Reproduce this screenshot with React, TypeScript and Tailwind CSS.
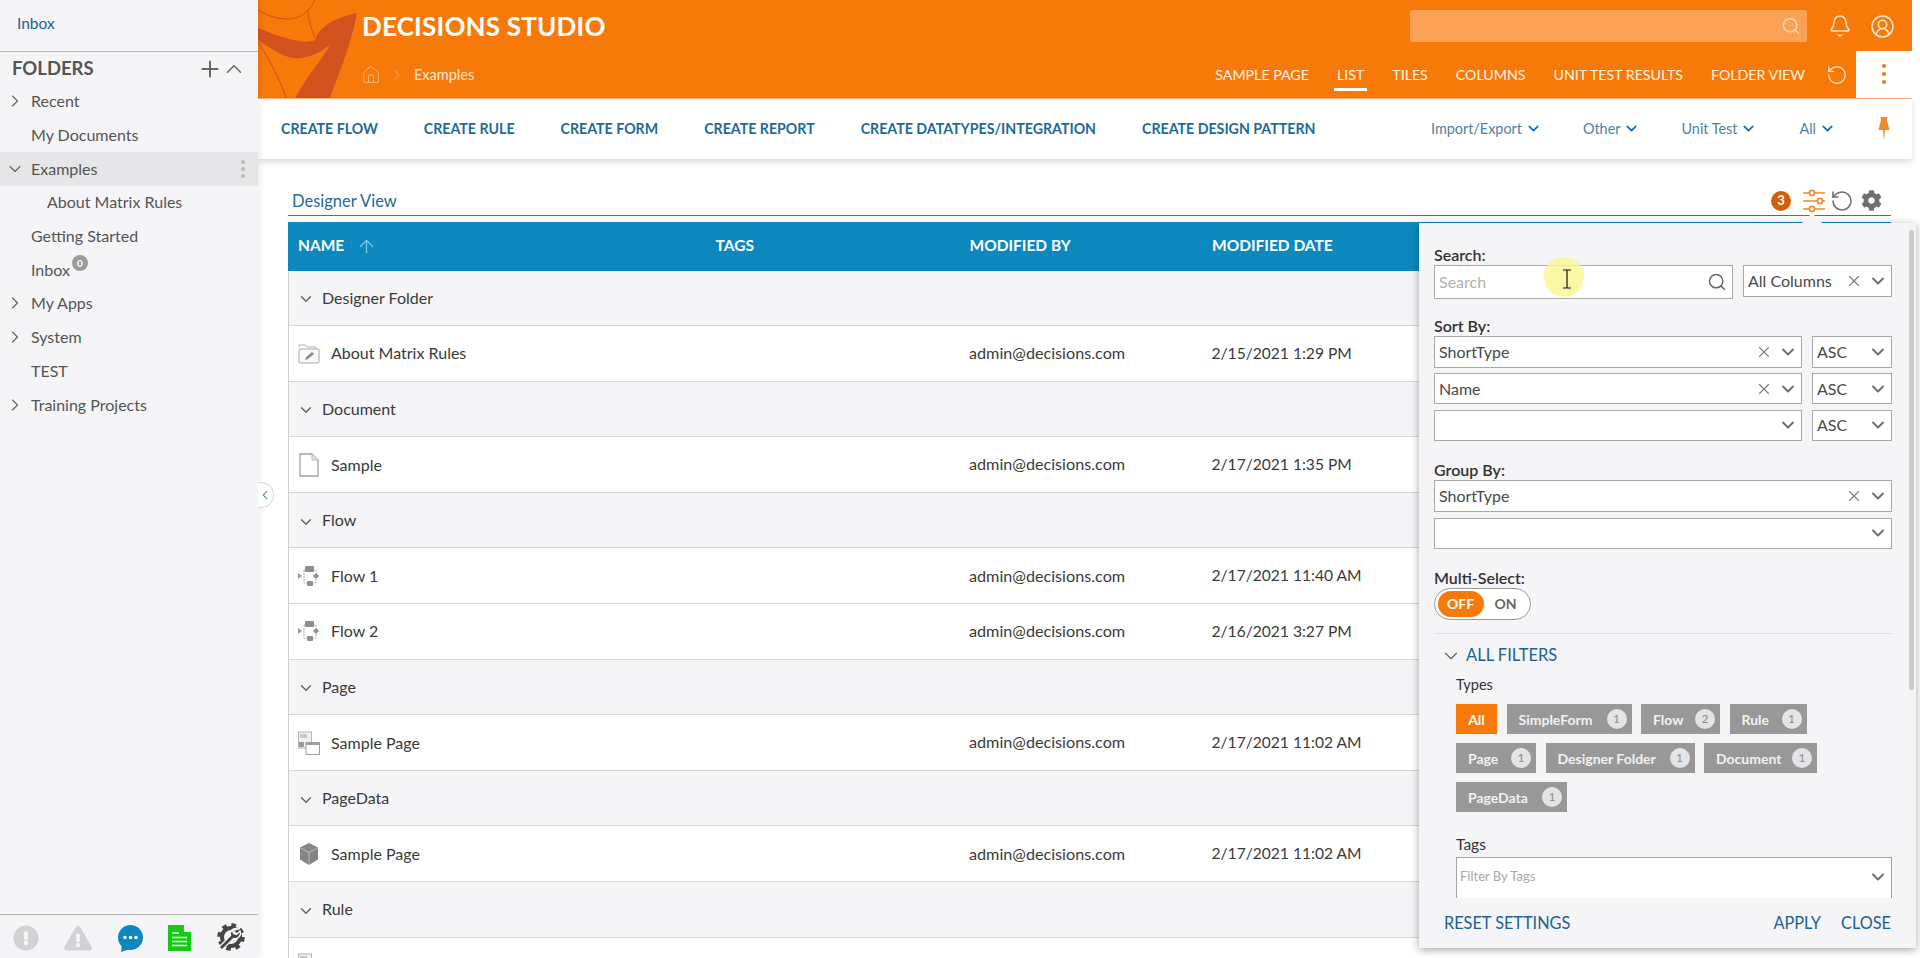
import React from "react";
import {
  ChevronRight, ChevronDown, ChevronUp, ChevronLeft, Plus, House, Bell, CircleUserRound,
  RotateCcw, Search, X, ArrowUp,
} from "lucide-react";
import { FaCog, FaExclamationCircle, FaExclamationTriangle } from "react-icons/fa";

const tree = [
  { t: "Recent", c: "r" },
  { t: "My Documents" },
  { t: "Examples", c: "d", active: true },
  { t: "About Matrix Rules", sub: true },
  { t: "Getting Started" },
  { t: "Inbox", badge: true },
  { t: "My Apps", c: "r" },
  { t: "System", c: "r" },
  { t: "TEST" },
  { t: "Training Projects", c: "r" },
];

function FolderIcon() {
  return (
    <svg width="22" height="22" viewBox="0 0 22 22" fill="none">
      <path d="M1 5V3h6l2 2h9v2" stroke="#b5b5b5" strokeWidth="1" />
      <rect x="1" y="7" width="20" height="14" rx="1" fill="#fafafa" stroke="#a8a8a8" />
      <path d="M7 18l1-3 6-5 2 2-6 5z" fill="#8c8c8c" />
    </svg>
  );
}
function DocIcon() {
  return (
    <svg width="22" height="24" viewBox="0 0 22 24" fill="none">
      <path d="M2 1h12l6 6v16H2z" fill="#fff" stroke="#a3a3a3" strokeWidth="1.3" />
      <path d="M14 1v6h6" fill="#e4e4e4" stroke="#b8b8b8" />
    </svg>
  );
}
function FlowIcon() {
  return (
    <svg width="22" height="22" viewBox="0 0 22 22" fill="none">
      <path d="M0 8l4 3-4 3z" fill="#9b9b9b" />
      <rect x="6" y="5" width="12" height="13" fill="none" stroke="#b0b0b0" strokeDasharray="2 1" />
      <rect x="7" y="1" width="9" height="6" rx="1" fill="#8f8f8f" />
      <rect x="9" y="16" width="6" height="5" rx="1" fill="#8f8f8f" />
      <path d="M18 8l3 3-3 3-3-3z" fill="#8f8f8f" />
    </svg>
  );
}
function PageIcon() {
  return (
    <svg width="22" height="24" viewBox="0 0 22 24" fill="none">
      <rect x="0.5" y="1" width="13" height="16" fill="#f1f1f1" stroke="#b5b5b5" />
      <rect x="2" y="3" width="7" height="4" fill="#c9c9c9" />
      <rect x="1" y="11" width="5" height="5" fill="#9a9a9a" />
      <rect x="8" y="11.5" width="13.5" height="12" fill="#fff" stroke="#9f9f9f" />
      <rect x="8" y="11.5" width="13.5" height="2.5" fill="#9f9f9f" />
    </svg>
  );
}
function CubeIcon() {
  return (
    <svg width="20" height="22" viewBox="0 0 20 22">
      <path d="M10 0l9 4.5v12L10 22l-9-5.500v-12z" fill="#858585" />
      <path d="M1.500 5L10 9.500 18.500 5M10 9.500V22" stroke="#c4c4c4" strokeWidth="0.9" fill="none" />
    </svg>
  );
}

type Row = { g?: string; n?: string; ic?: React.ReactNode; by?: string; date?: string };
const rows: Row[] = [
  { g: "Designer Folder" },
  { n: "About Matrix Rules", ic: <FolderIcon />, by: "admin@decisions.com", date: "2/15/2021 1:29 PM" },
  { g: "Document" },
  { n: "Sample", ic: <DocIcon />, by: "admin@decisions.com", date: "2/17/2021 1:35 PM" },
  { g: "Flow" },
  { n: "Flow 1", ic: <FlowIcon />, by: "admin@decisions.com", date: "2/17/2021 11:40 AM" },
  { n: "Flow 2", ic: <FlowIcon />, by: "admin@decisions.com", date: "2/16/2021 3:27 PM" },
  { g: "Page" },
  { n: "Sample Page", ic: <PageIcon />, by: "admin@decisions.com", date: "2/17/2021 11:02 AM" },
  { g: "PageData" },
  { n: "Sample Page", ic: <CubeIcon />, by: "admin@decisions.com", date: "2/17/2021 11:02 AM" },
  { g: "Rule" },
  { n: "", ic: <PageIcon /> },
];

function Select({ value, h, clear = true, w }: { value?: string; h: string; clear?: boolean; w: string }) {
  return (
    <div className={`${h} ${w} shrink-0 bg-white border border-[#a9a9a9] flex items-center pl-[4px] pr-[3px] text-[16px] text-[#4a4a4a]`}>
      <span className="flex-1 truncate">{value}</span>
      {clear && <X className="size-[18px] text-[#7b7b7b] mr-[5px]" strokeWidth={1.5} />}
      <ChevronDown className="size-[20px] text-[#6b6b6b]" strokeWidth={2.2} />
    </div>
  );
}

function Label({ children }: { children: React.ReactNode }) {
  return <div className="h-[21px] leading-[21px] text-[16px] font-semibold text-[#333]">{children}</div>;
}

const chips = [
  { t: "SimpleForm", n: 1, w: "w-[125px]" },
  { t: "Flow", n: 2, w: "w-[79px]" },
  { t: "Rule", n: 1, w: "w-[77px]" },
  { t: "Page", n: 1, w: "w-[80px]" },
  { t: "Designer Folder", n: 1, w: "w-[149px]" },
  { t: "Document", n: 1, w: "w-[113px]" },
  { t: "PageData", n: 1, w: "w-[111px]" },
];

export default function App() {
  return (
    <div className="relative w-[1920px] h-[958px] overflow-hidden flex bg-white pr-[8px] font-['Lato',sans-serif] text-[15px]">
      {/* sidebar */}
      <aside className="w-[258px] shrink-0 h-full bg-[#f5f4f7] flex flex-col shadow-[2px_0_6px_rgba(0,0,0,0.08)] z-10">
        <div className="h-[52px] border-b-[1.5px] border-[#b5b5b5] pl-[17px] pt-[13px] text-[#20628f] text-[15.5px] leading-[20px]">Inbox</div>
        <div className="h-[30.5px] mt-[2px] flex items-center pl-[12px] pr-[11.5px] text-[#555]">
          <span className="text-[18.5px] font-bold flex-1">FOLDERS</span>
          <Plus className="size-[26px] text-[#666] -mr-[2.5px]" strokeWidth={1.8} />
          <ChevronUp className="size-[26px] text-[#666]" strokeWidth={1.4} />
        </div>
        <div className="flex-1">
          {tree.map((it) => (
            <div key={it.t} className={`h-[33.7px] flex items-center text-[16px] text-[#555] ${it.active ? "bg-[#e6e5e8]" : ""} ${it.sub ? "pl-[47px]" : "pl-[5px]"}`}>
              {!it.sub && (
                <span className="w-[26px] flex">
                  {it.c === "r" && <ChevronRight className="size-[20px] text-[#666]" strokeWidth={1.4} />}
                  {it.c === "d" && <ChevronDown className="size-[20px] text-[#666]" strokeWidth={1.4} />}
                </span>
              )}
              <span>{it.t}</span>
              {it.badge && (
                <span className="ml-[2px] -mt-[13px] size-[16px] rounded-full bg-[#9b9b9b] text-white text-[10px] font-bold flex items-center justify-center">0</span>
              )}
              {it.active && (
                <span className="ml-auto mr-[13px] flex flex-col gap-[3px]">
                  <i className="size-[4px] rounded-full bg-[#b9b9b9]" />
                  <i className="size-[4px] rounded-full bg-[#b9b9b9]" />
                  <i className="size-[4px] rounded-full bg-[#b9b9b9]" />
                </span>
              )}
            </div>
          ))}
        </div>
        <div className="h-[44px] border-t-[1.5px] border-[#b8b8b8] flex items-center justify-between pl-[13px] pr-[12px] pt-[3px]">
          <FaExclamationCircle className="text-[#d2d2d4] text-[26px]" />
          <FaExclamationTriangle className="text-[#d2d2d4] text-[28px]" />
          <svg width="27" height="27" viewBox="0 0 27 27">
            <circle cx="13.500" cy="12.500" r="12.500" fill="#0e87c0" />
            <path d="M5 20l-1 7 9-3z" fill="#0e87c0" />
            <circle cx="8" cy="12.500" r="1.800" fill="#fff" />
            <circle cx="13.500" cy="12.500" r="1.800" fill="#fff" />
            <circle cx="19" cy="12.500" r="1.800" fill="#fff" />
          </svg>
          <svg width="23" height="26" viewBox="0 0 23 26">
            <path d="M0 0h16l7 7v19H0z" fill="#16c916" />
            <path d="M16 0v7h7" fill="#e8fbe8" />
            <path d="M4 8h7M4 12.500h15M4 16.500h15M4 20.500h15" stroke="#fff" strokeWidth="1.600" />
          </svg>
          <svg width="30" height="30" viewBox="0 0 30 30" fill="none">
            <circle cx="15" cy="14" r="9" stroke="#454545" strokeWidth="4" />
            <circle cx="15" cy="14" r="12" stroke="#454545" strokeWidth="3.500" strokeDasharray="4.700 4.725" />
            <path d="M22 6a5.500 5.500 0 0 0-7.500 6.500L3 24l3 3 11.500-11.500A5.500 5.500 0 0 0 24 8l-3.500 3.500-3-1-1-3z" fill="#454545" stroke="#f5f4f7" strokeWidth="1.400" />
          </svg>
        </div>
      </aside>

      {/* main */}
      <main className="relative flex-1 min-w-0 h-full flex flex-col">
        <header className="relative h-[98.5px] shrink-0 bg-[#f7790a] overflow-hidden border-b border-[#f9b277]">
          <svg className="absolute left-0 top-0" width="110" height="98" viewBox="0 0 110 98" fill="none">
            <path d="M99 13C80 17 62 25 57 40C45 45 25 38 0 28L0 40C15 50 30 60 42 58C55 57 65 50 72 45C65 58 50 75 37 98L72 98C78 80 92 50 99 13Z" fill="#d1521f" />
            <path d="M0 10C20 22 40 22 50 10C54 6 56 3 56 0M50 10C50 20 54 30 57 38M0 42C12 60 22 80 28 98" stroke="#c9521a" strokeWidth="1" />
          </svg>
          <div className="relative h-[52px] flex items-center pl-[104px] pr-[17px]">
            <span className="text-[26px] font-bold text-white tracking-[0.2px]">DECISIONS STUDIO</span>
            <div className="ml-auto w-[397px] h-[32px] rounded-[2px] bg-[#fba254] flex items-center justify-end pr-[6px] mr-[21px]">
              <Search className="size-[20px] text-[#fde3c9]" strokeWidth={1.5} />
            </div>
            <Bell className="size-[24px] text-[#fde3c9] mr-[18px]" strokeWidth={1.5} />
            <CircleUserRound className="size-[25px] text-[#fde3c9]" strokeWidth={1.5} />
          </div>
          <div className="relative h-[45.5px] flex items-center pl-[103px]">
            <House className="size-[20px] text-[#fbb574]" strokeWidth={1.2} />
            <ChevronRight className="size-[16px] text-[#fbb574] ml-[8px]" strokeWidth={1.2} />
            <span className="ml-[9px] text-[14.5px] text-[#fde7d2]">Examples</span>
            <nav className="ml-auto flex items-center gap-[28px] text-[14.2px] text-[#fff3e8] mr-[21px]">
              <span>SAMPLE PAGE</span>
              <span className="relative">
                LIST
                <i className="absolute -left-[3px] -right-[3px] -bottom-[6px] h-[3px] bg-white" />
              </span>
              <span>TILES</span>
              <span>COLUMNS</span>
              <span>UNIT TEST RESULTS</span>
              <span>FOLDER VIEW</span>
            </nav>
            <RotateCcw className="size-[22px] text-[#fde3c9] mr-[8px]" strokeWidth={1.4} />
            <div className="w-[56px] h-[47px] -mt-[1px] bg-white flex flex-col items-center justify-center gap-[4px]">
              <i className="size-[4px] rounded-full bg-[#e8791f]" />
              <i className="size-[4px] rounded-full bg-[#e8791f]" />
              <i className="size-[4px] rounded-full bg-[#e8791f]" />
            </div>
          </div>
        </header>

        <div className="h-[60.5px] shrink-0 bg-white shadow-[0_3px_6px_rgba(0,0,0,0.14)] z-[1] flex items-center pl-[23px] pr-[22px] text-[#1c6a9c] text-[14.2px] font-bold">
          <div className="flex gap-[46px]">
            <span>CREATE FLOW</span>
            <span>CREATE RULE</span>
            <span>CREATE FORM</span>
            <span>CREATE REPORT</span>
            <span>CREATE DATATYPES/INTEGRATION</span>
            <span>CREATE DESIGN PATTERN</span>
          </div>
          <div className="ml-auto flex items-center font-normal text-[14.4px] text-[#4f7fa3]">
            <span>Import/Export</span>
            <ChevronDown className="size-[17px] ml-[3px] text-[#0e6fae] mr-[41px]" strokeWidth={2.4} />
            <span>Other</span>
            <ChevronDown className="size-[17px] ml-[3px] text-[#0e6fae] mr-[41px]" strokeWidth={2.4} />
            <span>Unit Test</span>
            <ChevronDown className="size-[17px] ml-[3px] text-[#0e6fae] mr-[42px]" strokeWidth={2.4} />
            <span>All</span>
            <ChevronDown className="size-[17px] ml-[3px] text-[#0e6fae] mr-[42px]" strokeWidth={2.4} />
            <svg width="12" height="24" viewBox="0 0 12 24">
              <path d="M2.500 0h7L9 3l2.500 10H.500L3 3z" fill="#ee8a2c" />
              <path d="M5 13h2l-1 11z" fill="#ee8a2c" />
            </svg>
          </div>
        </div>

        <div className="flex-1 min-h-0 pl-[30px] pr-[21px] overflow-hidden">
          <div className="h-[56.5px] border-b-[1.5px] border-[#2b7fa5] flex items-end pb-[1px] pl-[4px] pr-[9px]">
            <span className="text-[16.5px] text-[#25699a]">Designer View</span>
            <div className="ml-auto flex items-center h-[26px]">
              <span className="size-[20px] rounded-full bg-[#d2600a] text-white text-[13px] font-bold flex items-center justify-center">3</span>
              <svg className="ml-[11px]" width="24" height="24" viewBox="0 0 24 24" fill="none" stroke="#ee8a2c" strokeWidth="1.600">
                <path d="M1 4h6M13 4h10M1 12h14M21 12h2M1 20h6M13 20h10" />
                <circle cx="10" cy="4" r="2.600" />
                <circle cx="18" cy="12" r="2.600" />
                <circle cx="10" cy="20" r="2.600" />
              </svg>
              <RotateCcw className="size-[24px] text-[#707070] ml-[4px]" strokeWidth={1.6} />
              <FaCog className="text-[#6f6f6f] text-[21px] ml-[7px]" />
            </div>
          </div>
          <div className="h-[49px] mt-[6px] bg-[#0d88bf] flex items-center text-white font-bold text-[15.5px]">
            <div className="w-[427.5px] pl-[10px] flex items-center">
              NAME
              <ArrowUp className="size-[21px] ml-[12px] text-[#7cc8ea]" strokeWidth={1.5} />
            </div>
            <div className="w-[254px]">TAGS</div>
            <div className="w-[242.5px]">MODIFIED BY</div>
            <div>MODIFIED DATE</div>
          </div>
          <div className="border-l-[1.5px] border-[#cfcfcf] text-[16px] text-[#3a3a3a]">
            {rows.map((r, i) =>
              r.g ? (
                <div key={i} className="h-[55.6px] bg-[#f5f4f7] border-b-[1.5px] border-[#d8d8d8] flex items-center pl-[8px]">
                  <ChevronDown className="size-[18px] text-[#666] mr-[7px] mt-[3px]" strokeWidth={1.9} />
                  <span>{r.g}</span>
                </div>
              ) : (
                <div key={i} className="h-[55.6px] bg-white border-b-[1.5px] border-[#d8d8d8] flex items-center">
                  <div className="w-[426px] pl-[9px] flex items-center">
                    <span className="w-[22px] flex justify-center">{r.ic}</span>
                    <span className="ml-[11px]">{r.n}</span>
                  </div>
                  <div className="w-[254px]" />
                  <div className="w-[242.5px] text-[16.2px]">{r.by}</div>
                  <div className="text-[15.6px]">{r.date}</div>
                </div>
              )
            )}
          </div>
        </div>
      </main>

      {/* settings popover */}
      <div className="absolute left-[1419px] top-[223px] w-[497px] h-[725px] z-20 bg-[#f5f4f7] shadow-[0_2px_8px_rgba(0,0,0,0.35)]">
        <i className="absolute left-[383px] -top-[10px] border-x-[10px] border-x-transparent border-b-[10px] border-b-[#f5f4f7]" />
        <div className="h-[675px] overflow-hidden pl-[15px] pr-[24px] pt-[21px]">
          <Label>Search:</Label>
          <div className="flex gap-[10px]">
            <div className="w-[299px] h-[34px] bg-white border border-[#a9a9a9] flex items-center pl-[4px] pr-[5px] text-[16px] text-[#b0b0b0]">
              <span className="flex-1">Search</span>
              <Search className="size-[20px] text-[#666]" strokeWidth={1.8} />
            </div>
            <Select value="All Columns" h="h-[32px]" w="w-[149px]" />
          </div>

          <div className="mt-[16px]"><Label>Sort By:</Label></div>
          <div className="flex gap-[10px]">
            <Select value="ShortType" h="h-[32px]" w="w-[368px]" />
            <Select value="ASC" h="h-[32px]" w="w-[80px]" clear={false} />
          </div>
          <div className="flex gap-[10px] mt-[5px]">
            <Select value="Name" h="h-[31px]" w="w-[368px]" />
            <Select value="ASC" h="h-[31px]" w="w-[80px]" clear={false} />
          </div>
          <div className="flex gap-[10px] mt-[5.5px]">
            <Select h="h-[31px]" w="w-[368px]" clear={false} />
            <Select value="ASC" h="h-[31px]" w="w-[80px]" clear={false} />
          </div>

          <div className="mt-[18.5px]"><Label>Group By:</Label></div>
          <Select value="ShortType" h="h-[32px]" w="w-[458px]" />
          <div className="mt-[5.5px]"><Select h="h-[31.5px]" w="w-[458px]" clear={false} /></div>

          <div className="mt-[18px] h-[20.5px]"><Label>Multi-Select:</Label></div>
          <div className="w-[97px] h-[32px] rounded-full border border-[#9c9c9c] bg-white flex items-center pl-[2.5px] text-[14px] font-bold">
            <span className="w-[46px] h-[26px] rounded-full bg-[#f7790a] text-white flex items-center justify-center">OFF</span>
            <span className="ml-[11px] text-[#666]">ON</span>
          </div>

          <div className="mt-[13px] border-t border-[#e2e2e2]" />
          <div className="mt-[12px] h-[20px] flex items-center pl-[6px] text-[#20628f] text-[16.5px]">
            <ChevronDown className="size-[22px] text-[#666] mr-[4px]" strokeWidth={1.4} />
            ALL FILTERS
          </div>
          <div className="ml-[22px]">
            <div className="mt-[9px] h-[20px] leading-[20px] text-[14.5px] text-[#333]">Types</div>
            <div className="mt-[9.5px] flex flex-wrap gap-x-[9.5px] gap-y-[9px] w-[380px] text-[14px] font-bold text-[#f2f2f2]">
              <span className="w-[41px] h-[30px] bg-[#f7790a] text-white flex items-center justify-center">All</span>
              {chips.map((c) => (
                <span key={c.t} className={`${c.w} h-[30px] bg-[#999899] flex items-center justify-between pl-[12px] pr-[5px]`}>
                  {c.t}
                  <i className="size-[20px] rounded-full bg-[#e4e3e5] text-[#8e8e8e] text-[12px] not-italic font-normal flex items-center justify-center">{c.n}</i>
                </span>
              ))}
            </div>
            <div className="mt-[21.5px] h-[20px] leading-[20px] text-[15.5px] text-[#333]">Tags</div>
            <div className="mt-[3.5px] h-[60px] bg-white border border-[#a3a3a3] flex items-start pl-[3px] pr-[3px] pt-[9px] text-[13px] text-[#a8a8a8]">
              <span className="flex-1">Filter By Tags</span>
              <ChevronDown className="size-[20px] text-[#6b6b6b]" strokeWidth={2.2} />
            </div>
          </div>
        </div>
        <div className="h-[50px] flex items-center pl-[25px] pr-[25px] text-[#20628f] text-[16.3px]">
          <span>RESET SETTINGS</span>
          <span className="ml-auto">APPLY</span>
          <span className="ml-[20px]">CLOSE</span>
        </div>
        <i className="absolute right-[2px] top-[7px] w-[5px] h-[460px] rounded-full bg-[#c9c9cb]" />
      </div>

      {/* cursor highlight */}
      <div className="absolute left-[1544px] top-[257px] size-[40px] rounded-full bg-[#f9f69a]/85 z-30 flex items-center justify-center">
        <svg className="ml-[6px] mt-[3px]" width="8" height="20" viewBox="0 0 8 20" fill="none" stroke="#111" strokeWidth="1.200">
          <path d="M0 1h8M0 19h8M4 1v18" />
        </svg>
      </div>

      {/* sidebar collapse handle */}
      <div className="absolute left-[258px] top-[482px] w-[16px] h-[26px] bg-white border border-l-0 border-[#d8d8d8] rounded-r-full z-10 flex items-center">
        <ChevronLeft className="size-[14px] text-[#0e79b2]" strokeWidth={1.8} />
      </div>
    </div>
  );
}
